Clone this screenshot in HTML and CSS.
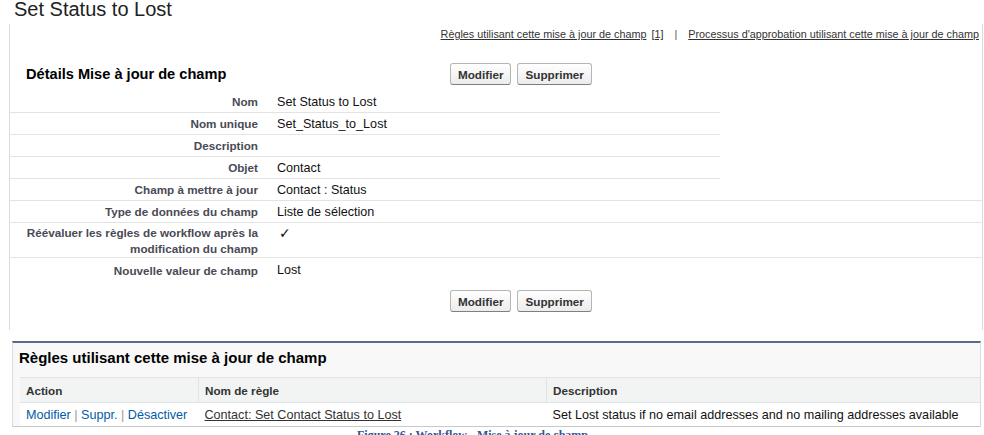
FILE: index.html
```html
<!DOCTYPE html>
<html lang="fr">
  <head>
    <meta charset="UTF-8" />
    <meta name="viewport" content="width=device-width, initial-scale=1.0" />
    <title>Set Status to Lost</title>
    <link rel="stylesheet" href="styles.css">
  </head>
  <body>
    <h1 class="page-title">Set Status to Lost</h1>

    <!--==================== DETAIL ====================-->
    <div class="detail">
      <div class="top-links">
        <a href="#rules">Règles utilisant cette mise à jour de champ</a>
        <a href="#rules" class="count">[1]</a>
        <span class="sep">|</span>
        <a href="#">Processus d'approbation utilisant cette mise à jour de champ</a>
      </div>

      <div class="block-header">
        <h2 class="block-title">Détails Mise à jour de champ</h2>
        <div class="buttons">
          <button type="button" class="btn">Modifier</button>
          <button type="button" class="btn">Supprimer</button>
        </div>
      </div>

      <div class="detail-list">
        <div class="row">
          <div class="label">Nom</div>
          <div class="value">Set Status to Lost</div>
          <div class="extra"></div>
        </div>
        <div class="row">
          <div class="label">Nom unique</div>
          <div class="value">Set_Status_to_Lost</div>
          <div class="extra"></div>
        </div>
        <div class="row">
          <div class="label">Description</div>
          <div class="value"></div>
          <div class="extra"></div>
        </div>
        <div class="row">
          <div class="label">Objet</div>
          <div class="value">Contact</div>
          <div class="extra"></div>
        </div>
        <div class="row full">
          <div class="label">Champ à mettre à jour</div>
          <div class="value">Contact : Status</div>
          <div class="extra"></div>
        </div>
        <div class="row full">
          <div class="label">Type de données du champ</div>
          <div class="value">Liste de sélection</div>
          <div class="extra"></div>
        </div>
        <div class="row full tall">
          <div class="label">Réévaluer les règles de workflow après la modification du champ</div>
          <div class="value"><span class="check">✓</span></div>
          <div class="extra"></div>
        </div>
        <div class="row last">
          <div class="label">Nouvelle valeur de champ</div>
          <div class="value">Lost</div>
          <div class="extra"></div>
        </div>
      </div>

      <div class="block-footer">
        <div class="buttons">
          <button type="button" class="btn">Modifier</button>
          <button type="button" class="btn">Supprimer</button>
        </div>
      </div>
    </div>

    <!--==================== RELATED LIST ====================-->
    <div class="related" id="rules">
      <h3 class="related-title">Règles utilisant cette mise à jour de champ</h3>
      <table class="related-table">
        <thead>
          <tr>
            <th class="col-action">Action</th>
            <th class="col-name">Nom de règle</th>
            <th>Description</th>
          </tr>
        </thead>
        <tbody>
          <tr>
            <td class="actions">
              <a href="#">Modifier</a> <span class="pipe">|</span>
              <a href="#">Suppr.</a> <span class="pipe">|</span>
              <a href="#">Désactiver</a>
            </td>
            <td><a href="#" class="rule-link">Contact: Set Contact Status to Lost</a></td>
            <td>Set Lost status if no email addresses and no mailing addresses available</td>
          </tr>
        </tbody>
      </table>
    </div>

    <p class="caption">Figure 26 : Workflow - Mise à jour de champ</p>
  </body>
</html>
```

FILE: styles.css
```css
body {
  font-family: "Liberation Sans", Arial, sans-serif;
  margin: 0;
  padding: 0;
  background-color: #fff;
  color: #000;
  overflow: hidden;
}
.page-title {
  margin: 0;
  padding-left: 14px;
  font-size: 20px;
  font-weight: normal;
  line-height: 18px;
  height: 18px;
  color: #222;
}

/* detail block */
.detail {
  margin: 6px 1px 0 9px;
  border-left: 1px solid #dcdcdc;
  border-right: 1px solid #dcdcdc;
  padding-bottom: 18px;
}
.top-links {
  text-align: right;
  padding: 4px 3px 0 0;
  font-size: 10.8px;
  line-height: 12px;
  height: 12px;
}
.top-links a {
  color: #333;
}
.top-links .count {
  margin-left: 2px;
}
.top-links .sep {
  color: #555;
  margin: 0 8px;
}
.block-header {
  display: flex;
  align-items: center;
  height: 28px;
  margin-top: 20px;
}
.block-title {
  width: 424px;
  padding-left: 16px;
  margin: 0;
  font-size: 14.6px;
  font-weight: bold;
  color: #000;
}
.buttons {
  display: flex;
  gap: 6px;
}
.btn {
  height: 22px;
  padding: 0 7px;
  font-family: "Liberation Sans", Arial, sans-serif;
  font-size: 11.7px;
  font-weight: bold;
  color: #333;
  background: linear-gradient(#ffffff, #ececec);
  border: 1px solid #b5b5b5;
  border-bottom-color: #7f7f7f;
  border-radius: 3px;
}
.detail-list {
  margin-top: 3px;
}
.row {
  display: grid;
  grid-template-columns: 258px 452px 1fr;
  height: 22px;
}
.row > div {
  display: flex;
  align-items: center;
  border-bottom: 1px solid #e3e3e3;
}
.row > .extra {
  border-bottom-color: transparent;
}
.row.full > .extra {
  border-bottom-color: #e3e3e3;
}
.label {
  justify-content: flex-end;
  text-align: right;
  padding-right: 10px;
  font-size: 11.7px;
  font-weight: bold;
  color: #4a4a56;
}
.value {
  padding-left: 9px;
  font-size: 12.6px;
  color: #111;
}
.row.tall {
  height: 35px;
}
.row.tall > div {
  align-items: flex-start;
}
.row.tall .label {
  padding-top: 2px;
  line-height: 15.5px;
}
.row.tall .value {
  padding-top: 2px;
}
.check {
  font-family: "DejaVu Sans", sans-serif;
  font-size: 14px;
  margin-left: 2px;
}
.row.last {
  height: 24px;
}
.row.last > div {
  border-bottom: none;
}
.block-footer {
  margin-top: 8px;
  padding-left: 440px;
}

/* related list */
.related {
  margin: 11px 3px 0 12px;
  background-color: #f8f8f8;
  border-top: 2px solid #5b6a8c;
  border-left: 1px solid #dcdcdc;
  border-right: 1px solid #dcdcdc;
  border-bottom: 1px solid #c9c9c9;
}
.related-title {
  margin: 0;
  padding: 6px 0 10px 6px;
  font-size: 15px;
  line-height: 18px;
  font-weight: bold;
  color: #000;
}
.related-table {
  margin-left: 7px;
  width: calc(100% - 7px);
  border-collapse: collapse;
  font-size: 12.6px;
}
.related-table th {
  height: 24px;
  padding: 0 0 0 6px;
  text-align: left;
  font-size: 11.7px;
  font-weight: bold;
  color: #333;
  background-color: #f2f3f3;
  border-top: 1px solid #e0e3e5;
  border-bottom: 1px solid #e0e3e5;
}
.related-table th + th {
  border-left: 1px solid #e0e3e5;
}
.related-table .col-action {
  width: 172px;
}
.related-table .col-name {
  width: 341px;
}
.related-table td {
  height: 23px;
  padding: 0 0 0 6px;
  background-color: #fff;
  color: #111;
}
.actions a {
  color: #015ba7;
  text-decoration: none;
}
.pipe {
  color: #999;
}
.rule-link {
  color: #333;
}
.caption {
  margin: 1px 0 0 0;
  padding-left: 357px;
  font-family: "Liberation Serif", "Times New Roman", serif;
  font-size: 12px;
  line-height: 14px;
  font-weight: bold;
  color: #2f5597;
}
```
